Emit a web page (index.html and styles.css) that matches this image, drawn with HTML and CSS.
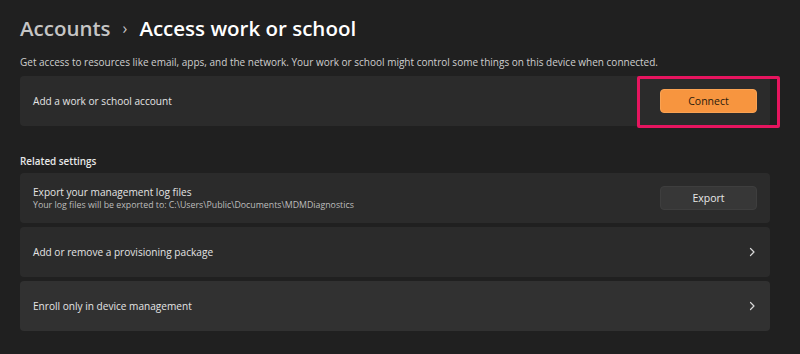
FILE: index.html
```html
<!DOCTYPE html>
<html>
<head>
    <title>Access work or school</title>
    <link rel="stylesheet" href="styles.css">
</head>
<body>
    <div class="page">
        <h1 class="crumbs">
            <span class="parent">Accounts</span>
            <span class="sep">&#8250;</span>
            <span class="current">Access work or school</span>
        </h1>

        <p class="intro">Get access to resources like email, apps, and the network. Your work or school might control some things on this device when connected.</p>

        <div class="card">
            <div class="card-text">
                <div class="card-title">Add a work or school account</div>
            </div>
            <button class="btn accent">Connect</button>
            <div class="highlight"></div>
        </div>

        <h2 class="section">Related settings</h2>

        <div class="card">
            <div class="card-text">
                <div class="card-title">Export your management log files</div>
                <div class="card-sub">Your log files will be exported to: C:\Users\Public\Documents\MDMDiagnostics</div>
            </div>
            <button class="btn">Export</button>
        </div>

        <div class="card link">
            <div class="card-text">
                <div class="card-title">Add or remove a provisioning package</div>
            </div>
            <svg class="chevron" width="10" height="10" viewBox="0 0 10 10"><path d="M3.5 1.5 L7 5 L3.5 8.5" fill="none" stroke="#d8d8d8" stroke-width="1.2" stroke-linecap="round" stroke-linejoin="round"/></svg>
        </div>

        <div class="card link hover">
            <div class="card-text">
                <div class="card-title">Enroll only in device management</div>
            </div>
            <svg class="chevron" width="10" height="10" viewBox="0 0 10 10"><path d="M3.5 1.5 L7 5 L3.5 8.5" fill="none" stroke="#d8d8d8" stroke-width="1.2" stroke-linecap="round" stroke-linejoin="round"/></svg>
        </div>
    </div>
</body>
</html>
```

FILE: styles.css
```css
html, body {
    margin: 0;
    background: #202020;
}
body {
    font-family: "Open Sans", "Noto Sans", sans-serif;
    color: #e6e6e6;
    height: 354px;
    overflow: hidden;
}
.page {
    padding: 12px 30px 0 20px;
}
.crumbs {
    margin: 0;
    font-size: 20.5px;
    font-weight: 600;
    line-height: 32px;
    display: flex;
    align-items: center;
    gap: 12px;
}
.parent {
    color: #c5c5c5;
}
.sep {
    color: #c5c5c5;
    font-size: 16px;
    font-weight: 400;
}
.current {
    color: #ffffff;
}
.intro {
    margin: 10px 0 6px;
    font-size: 10px;
    line-height: 16px;
    color: #cfcfcf;
}
.card {
    position: relative;
    display: flex;
    align-items: center;
    background: #2b2b2b;
    border-radius: 4px;
    height: 50px;
    padding: 0 13px;
    margin-bottom: 4px;
}
.card.hover {
    background: #313131;
}
.card-text {
    flex: 1;
}
.card-title {
    font-size: 10.1px;
    line-height: 14px;
    color: #e4e4e4;
}
.card-sub {
    font-size: 8.8px;
    line-height: 12px;
    color: #bdbdbd;
}
.btn {
    width: 97px;
    height: 24px;
    border-radius: 4px;
    font-family: inherit;
    font-size: 10.5px;
    background: #373737;
    color: #e8e8e8;
    border: 1px solid #3e3e3e;
}
.btn.accent {
    background: #f7953f;
    border-color: #f9a253;
    color: #2a1a0c;
}
.chevron {
    margin-right: 0;
}
.highlight {
    position: absolute;
    left: 617px;
    top: 0;
    box-sizing: border-box;
    width: 143px;
    height: 52px;
    border: 3px solid #e6155f;
    border-radius: 2px;
}
.section {
    margin: 27px 0 4px;
    font-size: 9.9px;
    font-weight: 600;
    line-height: 16px;
    color: #e8e8e8;
}
```
